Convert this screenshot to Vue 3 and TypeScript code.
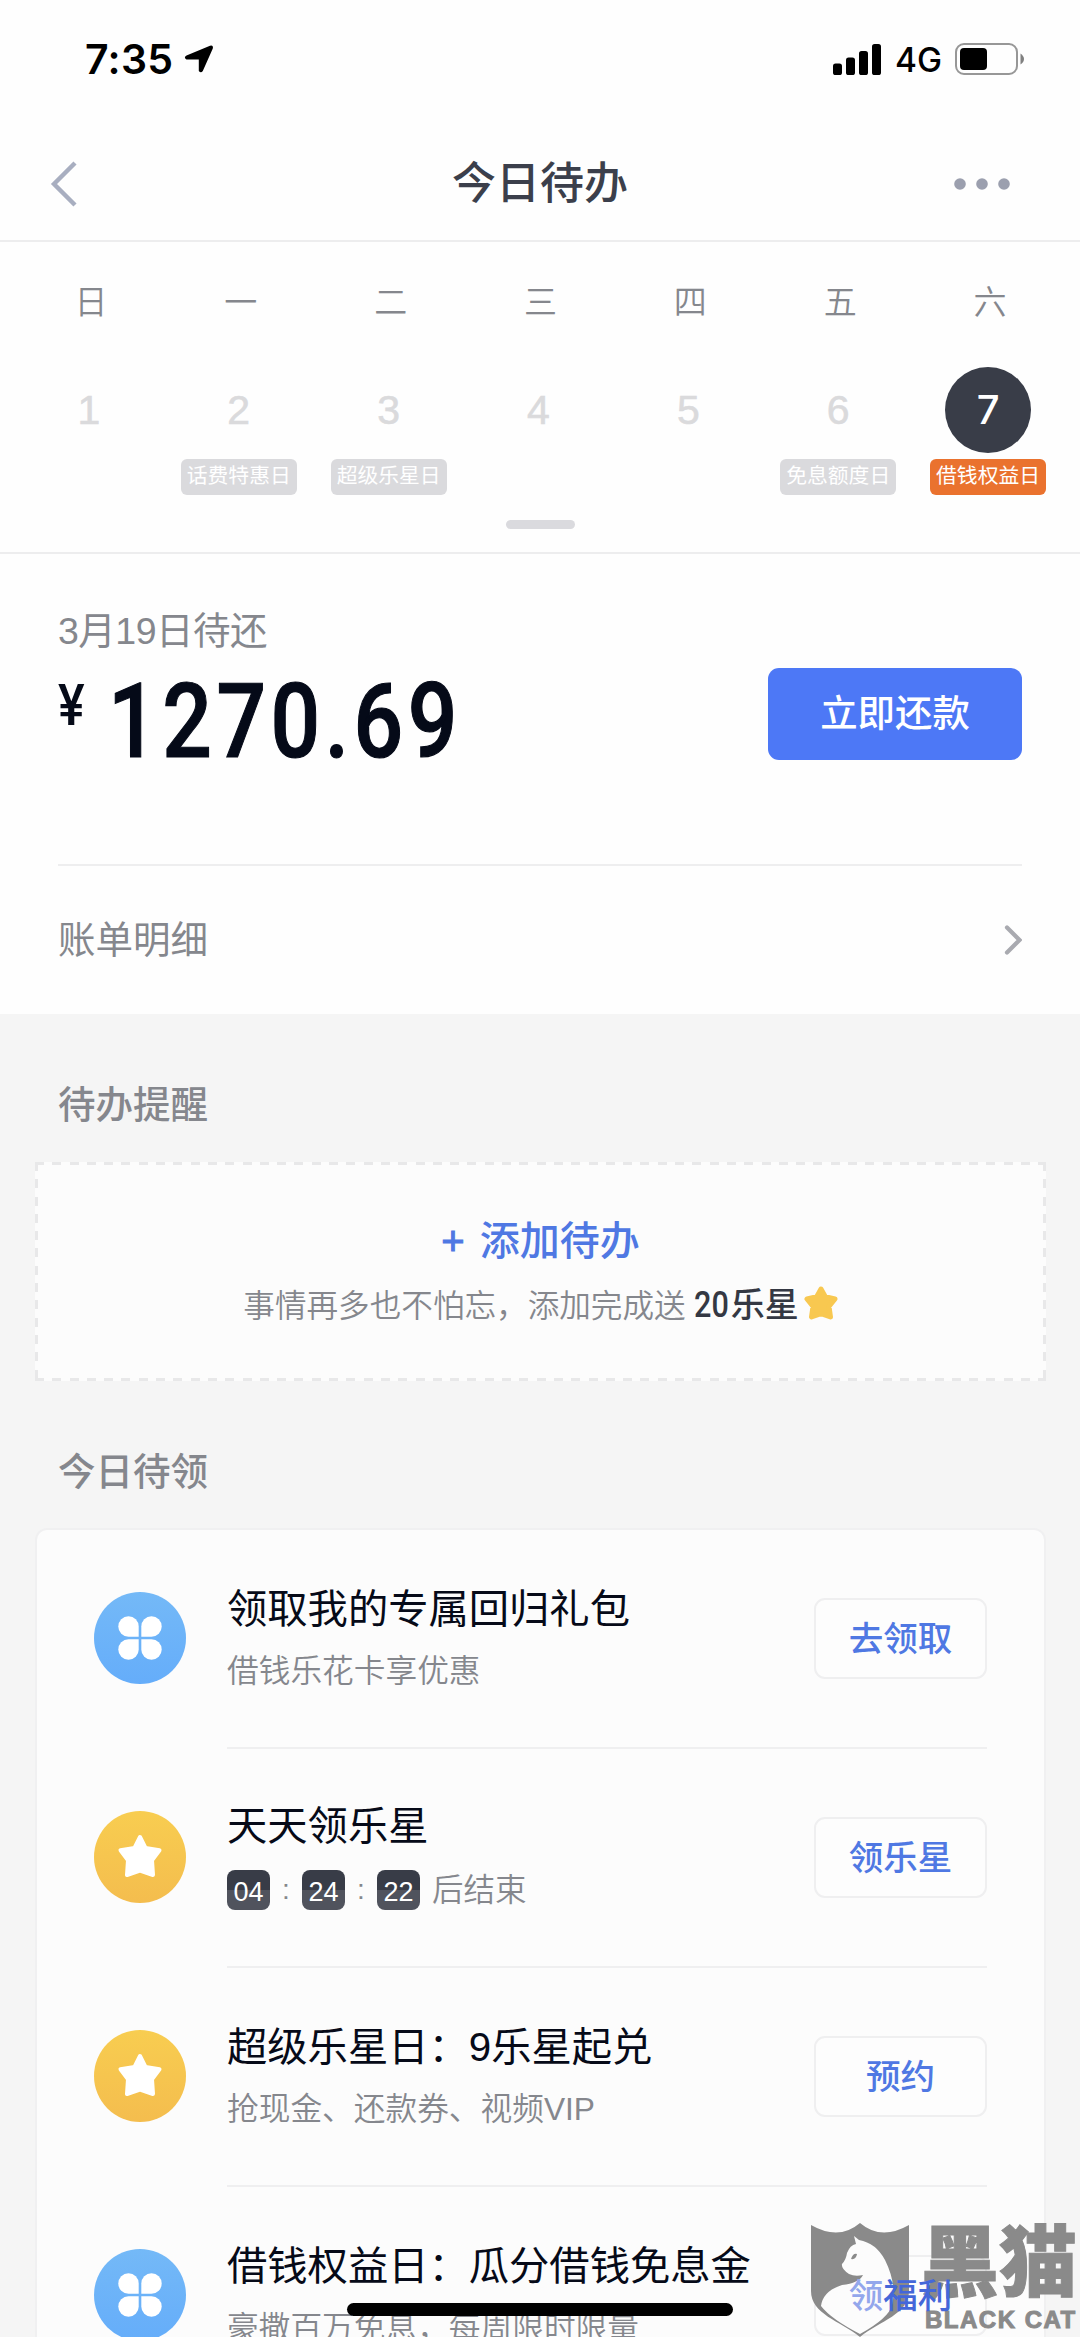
<script setup lang="ts">
interface Day {
  week: string
  date: number
  tag?: string
  active?: boolean
}

interface Task {
  icon: 'clover' | 'star'
  title: string
  desc?: string
  countdown?: string[]
  action: string
  marked?: boolean
}

const days: Day[] = [
  { week: '日', date: 1 },
  { week: '一', date: 2, tag: '话费特惠日' },
  { week: '二', date: 3, tag: '超级乐星日' },
  { week: '三', date: 4 },
  { week: '四', date: 5 },
  { week: '五', date: 6, tag: '免息额度日' },
  { week: '六', date: 7, tag: '借钱权益日', active: true },
]

const tasks: Task[] = [
  { icon: 'clover', title: '领取我的专属回归礼包', desc: '借钱乐花卡享优惠', action: '去领取' },
  { icon: 'star', title: '天天领乐星', countdown: ['04', '24', '22'], action: '领乐星' },
  { icon: 'star', title: '超级乐星日：9乐星起兑', desc: '抢现金、还款券、视频VIP', action: '预约' },
  { icon: 'clover', title: '借钱权益日：瓜分借钱免息金', desc: '豪撒百万免息，每周限时限量', action: '领福利', marked: true },
]
</script>

<template>
  <div class="page">
    <header class="status">
      <div class="status-left">
        <span class="time">7:35</span>
        <svg class="locate" width="30" height="28" viewBox="0 0 30 28">
          <path d="M2.5 10.500 26 .8Q29.600-.2 28.800 3.400L18.800 26Q17 28.500 14.800 26V14.500H2.500Q-.8 12.400 2.500 10.500Z" fill="#000" />
        </svg>
      </div>
      <div class="status-right">
        <svg width="49" height="31" viewBox="0 0 49 31">
          <rect x="0" y="19.5" width="9" height="11.5" rx="2.6" />
          <rect x="13" y="13.5" width="9" height="17.5" rx="2.6" />
          <rect x="26" y="7" width="9" height="24" rx="2.6" />
          <rect x="39" y="0" width="9" height="31" rx="2.6" />
        </svg>
        <span class="network">4G</span>
        <svg width="69" height="32" viewBox="0 0 69 32">
          <rect x="1" y="1" width="61" height="30" rx="8" fill="none" stroke="#979797" stroke-width="2" />
          <rect x="5" y="5" width="27" height="22" rx="4" />
          <path d="M65.5 10.5Q69 13 69 16T65.5 21.5Z" fill="#808080" />
        </svg>
      </div>
    </header>

    <nav class="nav">
      <svg width="28" height="46" viewBox="0 0 28 46">
        <path d="M25 2 4 23 25 44" fill="none" stroke="#a8aec0" stroke-width="4.4" />
      </svg>
      <h1>今日待办</h1>
      <svg width="56" height="12" viewBox="0 0 56 12" fill="#9b9fae">
        <circle cx="6" cy="6" r="5.8" />
        <circle cx="28" cy="6" r="5.8" />
        <circle cx="50" cy="6" r="5.8" />
      </svg>
    </nav>

    <section class="calendar">
      <div class="days">
        <div v-for="d in days" :key="d.date" class="day" :class="{ active: d.active }">
          <span class="week">{{ d.week }}</span>
          <span class="date">{{ d.date }}</span>
          <span v-if="d.tag" class="tag">{{ d.tag }}</span>
        </div>
      </div>
      <div class="handle"></div>
    </section>

    <section class="bill">
      <div class="bill-main">
        <div>
          <div class="due">3月19日待还</div>
          <div class="amount"><span class="yen">¥</span><span class="figure">1270.69</span></div>
        </div>
        <button class="pay">立即还款</button>
      </div>
      <div class="bill-link">
        <span>账单明细</span>
        <svg width="18" height="30" viewBox="0 0 18 30">
          <path d="M3 2.500 15.500 15 3 27.500" fill="none" stroke="#a9aab0" stroke-width="4.2" stroke-linecap="round" />
        </svg>
      </div>
    </section>

    <h2 class="heading">待办提醒</h2>
    <div class="add">
      <div class="add-title"><span class="plus">+</span>添加待办</div>
      <div class="add-desc">
        <span>事情再多也不怕忘，添加完成送</span>
        <b><i>20</i>乐星</b>
        <svg width="34" height="34" viewBox="0 0 34 34">
          <path d="M17 3 21.300 10.800 31 13 25 20.300 26.500 31 17 27.600 7.500 31 9 20.300 3 13 12.700 10.800Z" fill="#f8c850" stroke="#f8c850" stroke-width="5" stroke-linejoin="round" />
        </svg>
      </div>
    </div>

    <h2 class="heading second">今日待领</h2>
    <div class="card">
      <div v-for="t in tasks" :key="t.title" class="task">
        <div class="icon" :class="t.icon">
          <svg v-if="t.icon === 'clover'" width="44" height="44" viewBox="0 0 44 44" fill="#fff">
            <path d="M20.700 20.700H10.500A10.200 10.200 0 1 1 20.700 10.500Z" />
            <path d="M23.300 20.700V10.500A10.200 10.200 0 1 1 33.500 20.700Z" />
            <path d="M20.700 23.300V33.500A10.200 10.200 0 1 1 10.500 23.300Z" />
            <path d="M23.300 23.300H33.500A10.200 10.200 0 1 1 23.300 33.500Z" />
          </svg>
          <svg v-else width="46" height="46" viewBox="0 0 46 46">
            <path d="M23 4 28.500 15 42.500 17.200 35 27.200 36 42 23 37.500 10 42 11 27.200 3.500 17.200 17.500 15Z" fill="#fff" stroke="#fff" stroke-width="4" stroke-linejoin="round" />
          </svg>
        </div>
        <div class="body">
          <div class="texts">
            <div class="title">{{ t.title }}</div>
            <div v-if="t.countdown" class="countdown">
              <template v-for="(n, i) in t.countdown" :key="i">
                <span v-if="i" class="colon">:</span>
                <span class="num">{{ n }}</span>
              </template>
              <span class="after">后结束</span>
            </div>
            <div v-else class="desc">{{ t.desc }}</div>
          </div>
          <button class="action"><span :class="{ marked: t.marked }">{{ t.action }}</span></button>
        </div>
      </div>
    </div>

    <div class="watermark">
      <svg width="98" height="114" viewBox="0 0 98 114">
        <path d="M0 2Q28 18 49 0 70 18 98 2V68C98 91 69 98 49 114 29 98 0 91 0 68Z" fill="#8a8a8a" />
        <path d="M43 13 48 17Q65 20 74 37 86 61 81 82 78 95 49 111 20 96 10 83 12 68 31 62 48 60 52 52 44 54 38 51 30 46 31 41 35 37 36 30 39 22 45 21Z" fill="#fcfcfc" />
        <path d="M40 36Q42 30 46 31 45 37 40 36Z" fill="#8a8a8a" />
      </svg>
      <div class="brand">
        <div class="brand-cn">黑猫</div>
        <div class="brand-en">BLACK CAT</div>
      </div>
    </div>
    <div class="home"></div>
  </div>
</template>

<style>
body {
  margin: 0;
  background: #f5f5f5;
}
</style>

<style scoped>
.page {
  position: relative;
  width: 1080px;
  height: 2337px;
  overflow: hidden;
  background: #f5f5f5;
  font-family: "Liberation Sans", "Noto Sans CJK SC", sans-serif;
  color: #85878d;
}
.page * {
  box-sizing: border-box;
}
svg {
  display: block;
  flex: none;
}
h1,
h2 {
  margin: 0;
}
button {
  padding: 0;
  border: 0;
  font-family: inherit;
}
.status {
  height: 127px;
  padding: 0 56px 9px 85px;
  display: flex;
  align-items: center;
  justify-content: space-between;
  background: #fefefe;
  color: #000;
  font-family: Inter, sans-serif;
}
.status-left,
.status-right {
  display: flex;
  align-items: center;
}
.time {
  width: 99px;
  font-size: 41px;
  font-weight: 600;
  letter-spacing: 0.3px;
}
.network {
  width: 60px;
  margin-left: 13px;
  padding-top: 2px;
  font-size: 33.500px;
  font-weight: 450;
}
.nav {
  height: 115px;
  padding: 0 70px 0 50px;
  display: flex;
  align-items: center;
  justify-content: space-between;
  border-bottom: 2px solid #ededee;
  background: #fefefe;
}
.nav h1 {
  flex: 1;
  padding-left: 48px;
  text-align: center;
  font-size: 44px;
  font-weight: 500;
  line-height: 60px;
  color: #3b3f4b;
}
.calendar {
  height: 312px;
  padding-top: 30px;
  border-bottom: 2px solid #ededee;
  background: #fefefe;
}
.days {
  width: 1049px;
  height: 223px;
  margin-left: 14px;
  display: grid;
  grid-template-columns: repeat(7, 1fr);
}
.day {
  display: flex;
  flex-direction: column;
  align-items: center;
}
.week {
  height: 60px;
  margin-bottom: 35px;
  padding-left: 4px;
  line-height: 62px;
  font-size: 33px;
  font-weight: 350;
}
.date {
  width: 86px;
  height: 86px;
  line-height: 86px;
  text-align: center;
  font-size: 41px;
  color: #dadadc;
  -webkit-text-stroke: 0.6px currentColor;
}
.active .date {
  border-radius: 50%;
  background: #393d48;
  color: #fff;
  font-family: Inter, sans-serif;
  font-weight: 500;
  font-size: 40px;
  -webkit-text-stroke: 0;
}
.tag {
  width: 116px;
  height: 36px;
  margin-top: 6px;
  border-radius: 6px;
  background: #dadadd;
  color: #fff;
  text-align: center;
  font-size: 20.8px;
  line-height: 34px;
}
.active .tag {
  background: #ea722e;
}
.handle {
  width: 69px;
  height: 9px;
  margin: 25px auto 0;
  border-radius: 5px;
  background: #dadade;
}
.bill {
  height: 460px;
  padding: 0 58px;
  background: #fefefe;
}
.bill-main {
  height: 312px;
  display: flex;
  justify-content: space-between;
  border-bottom: 2px solid #eeeeef;
}
.due {
  margin-top: 58px;
  line-height: 38px;
  height: 40px;
  font-size: 37.500px;
  letter-spacing: -0.5px;
}
.amount {
  margin-top: 15px;
  display: flex;
  font-family: Roboto, sans-serif;
  font-weight: 500;
  color: #050a18;
}
.yen {
  width: 50px;
  font-size: 57px;
  line-height: 78px;
  transform: scaleX(0.88);
  transform-origin: left;
}
.figure {
  font-size: 104px;
  line-height: 110px;
  letter-spacing: 5.4px;
  -webkit-text-stroke: 1.2px currentColor;
  transform: scaleX(0.84);
  transform-origin: left;
}
.pay {
  width: 254px;
  height: 92px;
  margin-top: 114px;
  border-radius: 11px;
  background: #4d78f6;
  color: #fff;
  font-size: 37.400px;
  font-weight: 500;
  line-height: 92px;
}
.bill-link {
  height: 148px;
  display: flex;
  align-items: center;
  justify-content: space-between;
  font-size: 37.500px;
}
.bill-link span {
  padding-bottom: 7px;
}
.heading {
  margin: 66px 58px 32px;
  font-size: 37.500px;
  line-height: 50px;
  font-weight: 500;
}
.heading.second {
  margin: 66px 58px 31px;
}
.add {
  --dash-x: repeating-linear-gradient(90deg, #e8e8e9 0 9px, transparent 9px 17.300px);
  --dash-y: repeating-linear-gradient(180deg, #e8e8e9 0 9px, transparent 9px 17.300px);
  height: 219px;
  margin: 0 34px 0 35px;
  padding-top: 49px;
  background:
    var(--dash-x) top / 100% 3px no-repeat,
    var(--dash-x) bottom / 100% 3px no-repeat,
    var(--dash-y) left / 3px 100% no-repeat,
    var(--dash-y) right / 3px 100% no-repeat,
    #fcfcfc;
  text-align: center;
}
.add-title {
  font-size: 40px;
  line-height: 60px;
  font-weight: 500;
  color: #4f78e3;
}
.plus {
  margin-right: 15px;
  font-weight: 400;
  -webkit-text-stroke: 1px currentColor;
}
.add-desc {
  display: flex;
  align-items: center;
  justify-content: center;
  height: 63px;
  font-size: 31.600px;
  font-weight: 350;
}
.add-desc b {
  margin: 0 5px 0 8px;
  font-size: 34px;
  font-weight: 500;
  color: #343843;
}
.add-desc i {
  display: inline-block;
  width: 37px;
  font: 500 36px Roboto, sans-serif;
  transform: scaleX(0.85);
  transform-origin: left;
}
.card {
  width: 1011px;
  height: 900px;
  margin: 0 34px 0 35px;
  border: 2px solid #f0f0f1;
  border-radius: 12px;
  background: #fcfcfc;
}
.task {
  height: 219px;
  padding: 0 57px;
  display: flex;
}
.icon {
  width: 92px;
  height: 92px;
  margin: 62px 41px 0 0;
  display: flex;
  align-items: center;
  justify-content: center;
  border-radius: 50%;
}
.clover {
  background: linear-gradient(#74b9f7, #65adfa);
}
.star {
  background: linear-gradient(#f8cd50, #f4bd4e);
}
.star svg {
  margin-bottom: 2px;
}
.body {
  flex: 1;
  display: flex;
  justify-content: space-between;
  border-bottom: 2px solid #efeff0;
}
.texts {
  padding-top: 52px;
  white-space: nowrap;
}
.title {
  font-size: 40.300px;
  line-height: 56px;
  color: #060a18;
}
.desc {
  margin-top: 13px;
  font-size: 31.700px;
  line-height: 40px;
  font-weight: 350;
}
.texts:has(.countdown) {
  padding-top: 50px;
}
.countdown {
  margin-top: 15px;
  display: flex;
  align-items: center;
  font-size: 31.500px;
  line-height: 40px;
  font-weight: 350;
}
.num {
  width: 43px;
  height: 40px;
  padding-top: 2px;
  border-radius: 8px;
  background: linear-gradient(#383c47 50%, #50535d 50%);
  color: #fff;
  text-align: center;
  font-size: 27px;
}
.colon {
  width: 32px;
  text-align: center;
  font-size: 28px;
}
.after {
  margin-left: 12px;
  line-height: 38px;
}
.action {
  width: 173px;
  height: 81px;
  margin-top: 68px;
  border: 2px solid #efeff0;
  border-radius: 11px;
  background: #fdfdfd;
  color: #4f78e3;
  font-size: 34.500px;
  font-weight: 500;
  line-height: 78px;
}
.action span {
  display: block;
}
.marked {
  position: relative;
  z-index: 2;
  color: #4467d9;
}
.marked::first-letter {
  color: #93a7ec;
}
.watermark {
  position: absolute;
  z-index: 1;
  right: 0;
  bottom: 0;
  width: 269px;
  height: 114px;
  display: flex;
  color: #8a8a8a;
}
.brand {
  margin-left: 16px;
  white-space: nowrap;
}
.brand-cn {
  height: 82px;
  margin-left: -4px;
  font-size: 78px;
  line-height: 82px;
  font-weight: 900;
  -webkit-text-stroke: 1px #8a8a8a;
}
.brand-en {
  font-size: 24px;
  line-height: 30px;
  font-weight: 700;
  letter-spacing: 1.5px;
  -webkit-text-stroke: 1px #8a8a8a;
}
.home {
  position: absolute;
  z-index: 3;
  left: 347px;
  bottom: 21px;
  width: 386px;
  height: 13px;
  border-radius: 7px;
  background: #000;
}
</style>
